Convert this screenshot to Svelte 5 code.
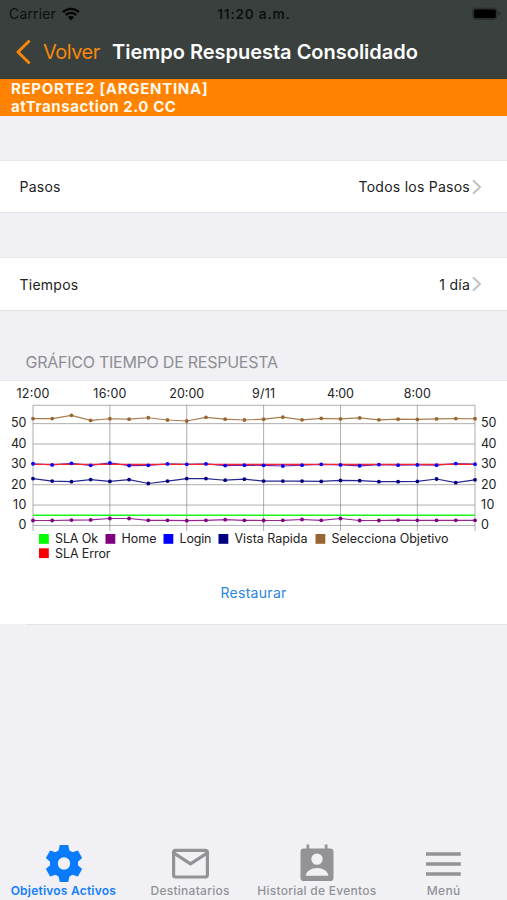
<script>
  const left = 33;
  const right = 475;
  const top = 24.3;
  const zero = 144.4;
  const unit = 2.035;

  const series = [
    { name: 'Selecciona', color: '#996633', values: [52.5, 52.5, 54.1, 51.6, 52.4, 52.2, 52.9, 51.8, 51.3, 53.1, 52.2, 51.8, 52.2, 53.2, 51.9, 52.6, 52.3, 52.8, 51.9, 52.2, 52.1, 52.3, 52.5, 52.4] },
    { name: 'Vista', color: '#000080', values: [23, 21.8, 21.5, 22.5, 21.6, 22.5, 20.6, 21.8, 23, 23, 22.2, 22.7, 21.8, 21.8, 21.8, 21.6, 22.1, 22, 21.5, 21.5, 21.6, 22.8, 21, 22.4] },
    { name: 'Login', color: '#0000ff', line: '#5a0096', values: [30.3, 29.7, 30.5, 29.5, 30.7, 29.4, 29.5, 30.2, 30, 30.2, 29.4, 29.6, 29.5, 29.2, 29.6, 30, 29.7, 29.3, 29.9, 29.6, 29.7, 29.6, 30.4, 30.1] },
    { name: 'Home', color: '#800080', values: [2.4, 2.4, 2.6, 2.7, 3.4, 3.4, 2.5, 2.5, 2.3, 2.5, 2.8, 2.5, 2.4, 2.5, 2.9, 2.5, 3.4, 2.4, 2.4, 2.6, 2.5, 2.5, 2.5, 2.5] },
  ];

  const hours = [
    { label: '12:00', i: 0, w: 33 },
    { label: '16:00', i: 4, w: 33 },
    { label: '20:00', i: 8, w: 35 },
    { label: '9/11', i: 12, w: 23 },
    { label: '4:00', i: 16, w: 27 },
    { label: '8:00', i: 20, w: 27 },
  ];

  const legend = [
    { label: 'SLA Ok', color: '#00ff00', x: 39, y: 153, w: 43 },
    { label: 'Home', color: '#800080', x: 105.5, y: 153, w: 35 },
    { label: 'Login', color: '#0000ff', x: 163.5, y: 153, w: 32 },
    { label: 'Vista Rapida', color: '#000080', x: 218.5, y: 153, w: 73 },
    { label: 'Selecciona Objetivo', color: '#996633', x: 315.5, y: 153, w: 117 },
    { label: 'SLA Error', color: '#ff0000', x: 39, y: 167.3, w: 55.5 },
  ];

  const ticks = [0, 10, 20, 30, 40, 50];
  const teeth = [0, 60, 120, 180, 240, 300];

  const px = (i) => left + (i * (right - left)) / 23;
  const py = (v) => zero - v * unit;
  const points = (values) => values.map((v, i) => `${px(i)},${py(v)}`).join(' ');
</script>

<div class="screen">
  <header>
    <div class="status">
      <div class="carrier">
        <span>Carrier</span>
        <svg width="18" height="14" viewBox="0 0 18 14">
          <g fill="none" stroke="#050706" stroke-width="2.3">
            <path d="M1 5.100a11.400 11.400 0 0 1 16 0" />
            <path d="M3.800 8.100a7.400 7.400 0 0 1 10.400 0" />
          </g>
          <path d="M9 13.400 5.900 10.200a4.500 4.500 0 0 1 6.200 0z" fill="#050706" />
        </svg>
      </div>
      <strong>11:20 a.m.</strong>
      <div class="battery">
        <svg width="30" height="14" viewBox="0 0 30 14">
          <rect x="0" y="0.5" width="25.5" height="12.4" rx="3.8" fill="#2a302e" />
          <rect x="2" y="2.4" width="21.8" height="8.6" rx="1.8" fill="#000" />
          <path d="M26.5 4.700v4q2-.5 2-2t-2-2z" fill="#252b29" />
        </svg>
      </div>
    </div>
    <div class="nav">
      <svg width="15" height="24" viewBox="0 0 15 24">
        <path d="M12.700 1.500 2 12 12.700 22.500" fill="none" stroke="#f8880c" stroke-width="3" stroke-linecap="round" stroke-linejoin="round" />
      </svg>
      <span class="back">Volver</span>
      <h1>Tiempo Respuesta Consolidado</h1>
    </div>
  </header>

  <div class="banner">
    <div class="report">REPORTE2 [ARGENTINA]</div>
    <div class="transaction">atTransaction 2.0 CC</div>
  </div>

  <div class="row first">
    <span>Pasos</span>
    <span class="value">Todos los Pasos</span>
    <svg width="10" height="16" viewBox="0 0 10 16"><path d="M1 1.300 8 8l-7 6.700" /></svg>
  </div>
  <div class="row second">
    <span>Tiempos</span>
    <span class="value">1 día</span>
    <svg width="10" height="16" viewBox="0 0 10 16"><path d="M1 1.300 8 8l-7 6.700" /></svg>
  </div>

  <h2>GRÁFICO TIEMPO DE RESPUESTA</h2>

  <section>
    <svg class="chart" width="507" height="184" viewBox="0 0 507 184">
      {#each hours as h}
        <text x={px(h.i)} y="17" text-anchor="middle" textLength={h.w}>{h.label}</text>
        <line x1={px(h.i)} x2={px(h.i)} y1={top} y2="150" class="grid" />
      {/each}
      <line x1={right} x2={right} y1={top} y2="150" class="grid" />
      <line x1={left} x2={right} y1={top} y2={top} class="grid" />
      {#each ticks as t}
        <line x1={left} x2={right} y1={py(t)} y2={py(t)} class="grid" />
        <text x="26.5" y={py(t) + 3.8} text-anchor="end" textLength={t ? (t === 10 ? 13.5 : 15.5) : 7.5}>{t}</text>
        <text x="481" y={py(t) + 3.8} textLength={t ? (t === 10 ? 13.5 : 15.5) : 7.5}>{t}</text>
      {/each}

      <line x1={left} x2={right} y1={py(5)} y2={py(5)} stroke="#1cf51c" stroke-width="1.5" />
      {#each series as s}
        <polyline points={points(s.values)} fill="none" stroke={s.line ?? s.color} stroke-width="1.2" stroke-opacity="0.85" />
      {/each}
      <line x1={left} x2={right} y1={py(30)} y2={py(30)} stroke="#fa2030" stroke-width="1.3" />
      {#each series as s}
        {#each s.values as v, i}
          <circle cx={px(i)} cy={py(v)} r="1.9" fill={s.color} />
        {/each}
      {/each}

      {#each legend as l}
        <rect x={l.x} y={l.y} width="9.8" height="9.8" fill={l.color} />
        <text x={l.x + 16} y={l.y + 9.2} textLength={l.w}>{l.label}</text>
      {/each}
    </svg>
    <button>Restaurar</button>
  </section>
  <div class="divider"></div>

  <nav class="tabs">
    <div class="tab active">
      <svg viewBox="-22.5 -22.5 45 45" width="45" height="45">
        <circle cx="0.5" cy="1" r="10" fill="none" stroke="#087bff" stroke-width="7.6" />
        <g transform="translate(0.5 1)">
          {#each teeth as angle}
            <path d="M-4.200-18.500h8.400l1.200 5.500 2.200 1.600-2 2.400h-11.200l-2-2.400 2.200-1.600z" transform="rotate({angle})" />
          {/each}
        </g>
      </svg>
      <span class="goals">Objetivos Activos</span>
    </div>
    <div class="tab">
      <svg viewBox="0 0 45 45" width="45" height="45">
        <g fill="none" stroke="#929297" stroke-width="3.2" stroke-linejoin="round">
          <rect x="5.6" y="10.4" width="33.8" height="26.6" rx="2" />
          <path d="M6 13.200 22.500 23.800 39 13.200" />
        </g>
      </svg>
      <span class="people">Destinatarios</span>
    </div>
    <div class="tab">
      <svg viewBox="0 0 45 45" width="45" height="45">
        <path d="M12 4.500h2.800v4h15.400v-4H33v4h2.600q3.400 0 3.400 3.400v25.800q0 3.400-3.400 3.400H9.400Q6 41.100 6 37.700V11.900q0-3.400 3.400-3.400H12zM22.500 13.400a5.700 5.700 0 1 0 0 11.400 5.700 5.700 0 0 0 0-11.400zM11.300 35.800h22.600c0-4.800-6-7.900-11.300-7.900s-11.300 3.100-11.300 7.900z" fill-rule="evenodd" transform="translate(0.5 0)" />
      </svg>
      <span class="history">Historial de Eventos</span>
    </div>
    <div class="tab">
      <svg viewBox="0 0 45 45" width="45" height="45">
        <path d="M5 12.200h34.800v3.600H5zm0 10h34.800v3.600H5zm0 10h34.800v3.600H5z" />
      </svg>
      <span>Menú</span>
    </div>
  </nav>
</div>

<style>
  :global(body) {
    margin: 0;
    background: #f0f0f5;
  }

  .screen {
    width: 507px;
    height: 900px;
    display: flex;
    flex-direction: column;
    overflow: hidden;
    background: #f0f0f5;
    color: #222;
    font-family: Inter, "Liberation Sans", sans-serif;
    font-size: 14px;
    white-space: nowrap;
  }

  header {
    height: 79px;
    background: #39403d;
    flex: none;
  }

  .status {
    display: grid;
    grid-template-columns: 1fr auto 1fr;
    align-items: center;
    height: 27px;
    padding: 0 5px 0 9px;
    color: #0c100e;
    font-size: 14px;
  }

  .status strong {
    margin-left: -3px;
    font-size: 13.5px;
    font-weight: 600;
    letter-spacing: 0.85px;
  }

  .carrier {
    display: flex;
    align-items: center;
    gap: 6px;
    letter-spacing: 0.15px;
  }

  .battery {
    display: flex;
    justify-content: flex-end;
  }

  .nav {
    display: flex;
    align-items: center;
    height: 50px;
    padding-left: 16px;
  }

  .back {
    margin-left: 12px;
    width: 69px;
    color: #f8880c;
    font-size: 20px;
    letter-spacing: -0.5px;
  }

  h1 {
    margin: 0;
    color: #fff;
    font-size: 20px;
    font-weight: 600;
    letter-spacing: -0.01px;
  }

  .banner {
    height: 37px;
    padding: 1px 0 0 11px;
    box-sizing: border-box;
    background: #ff8200;
    color: #fff8ec;
    font-size: 15px;
    font-weight: 700;
    line-height: 18px;
    flex: none;
  }

  .report {
    letter-spacing: 0.7px;
  }

  .transaction {
    letter-spacing: 0.56px;
  }

  .row {
    display: flex;
    align-items: center;
    height: 53px;
    padding: 0 25px 0 19.5px;
    box-sizing: border-box;
    background: #fff;
    border-top: 1px solid #e7e7ea;
    border-bottom: 1px solid #e2e2e5;
    letter-spacing: 0.25px;
    flex: none;
  }

  .first {
    margin-top: 44px;
  }

  .second {
    height: 54px;
    margin-top: 44px;
  }

  .value {
    margin-left: auto;
    margin-right: 2px;
  }

  .row path {
    fill: none;
    stroke: #c2c2c4;
    stroke-width: 2;
  }

  h2 {
    margin: 0;
    height: 69px;
    padding: 41px 0 0 25.5px;
    box-sizing: border-box;
    color: #8e8e93;
    font-size: 16px;
    font-weight: 400;
    line-height: 20px;
    letter-spacing: -0.25px;
    flex: none;
  }

  section {
    display: flex;
    flex-direction: column;
    height: 244px;
    box-sizing: border-box;
    background: #fff;
    border-top: 1px solid #e7e7ea;
    flex: none;
  }

  .chart text {
    font-size: 12.5px;
    fill: #222;
  }

  .grid {
    stroke: #777;
    stroke-opacity: 0.75;
    stroke-width: 0.8;
  }

  button {
    margin: 17px 0 0;
    padding: 0;
    border: 0;
    background: none;
    color: #2a86e2;
    font: inherit;
    line-height: 22px;
    letter-spacing: 0.3px;
  }

  .divider {
    height: 1px;
    margin-left: 26px;
    background: #e4e4e8;
    flex: none;
  }

  .tabs {
    display: grid;
    grid-template-columns: repeat(4, 1fr);
    margin-top: auto;
    height: 60px;
  }

  .tab {
    display: flex;
    flex-direction: column;
    align-items: center;
    color: #929297;
    fill: #929297;
    font-size: 12px;
    font-weight: 500;
    line-height: 16px;
    letter-spacing: 0.27px;
  }

  .tab span {
    margin-top: -2px;
  }

  .active {
    color: #147efb;
    fill: #087bff;
    font-weight: 600;
    letter-spacing: 0.22px;
  }
</style>
